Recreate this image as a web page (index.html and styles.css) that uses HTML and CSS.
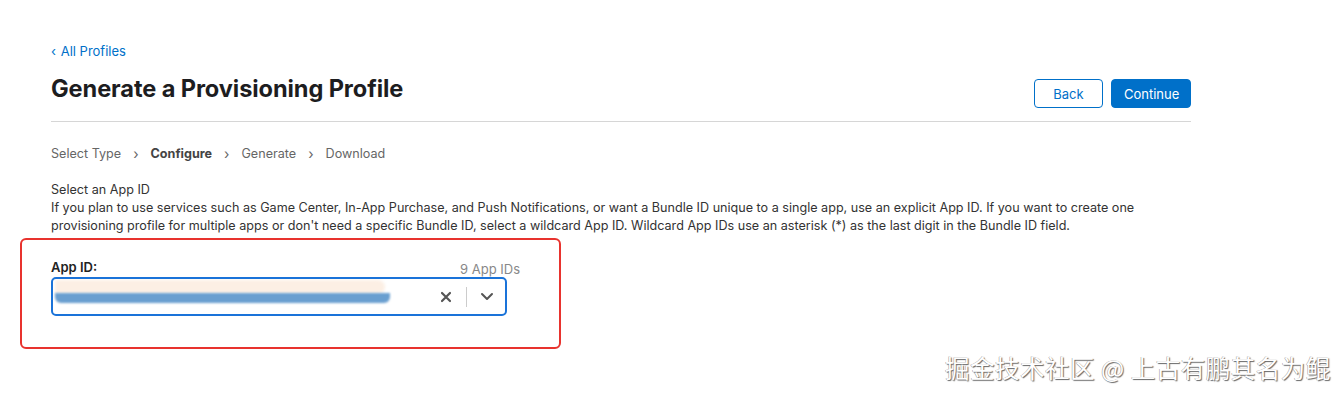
FILE: index.html
```html
<!DOCTYPE html>
<html lang="en">
<head>
<meta charset="utf-8">
<link rel="stylesheet" href="styles.css">
</head>
<body>
<main class="page">
  <a class="back-link" href="#"><span class="chev">&lsaquo;</span> All Profiles</a>
  <header class="head">
    <h1 class="title">Generate a Provisioning Profile</h1>
    <div class="actions">
      <button class="btn btn-outline">Back</button>
      <button class="btn btn-primary">Continue</button>
    </div>
  </header>
  <nav class="steps">
    <span class="step">Select Type</span>
    <span class="sep">&rsaquo;</span>
    <span class="step step-current">Configure</span>
    <span class="sep">&rsaquo;</span>
    <span class="step">Generate</span>
    <span class="sep">&rsaquo;</span>
    <span class="step">Download</span>
  </nav>
  <section class="intro">
    <p class="intro-title">Select an App ID</p>
    <p class="intro-text">If you plan to use services such as Game Center, In-App Purchase, and Push Notifications, or want a Bundle ID unique to a single app, use an explicit App ID. If you want to create one provisioning profile for multiple apps or don't need a specific Bundle ID, select a wildcard App ID. Wildcard App IDs use an asterisk (*) as the last digit in the Bundle ID field.</p>
  </section>
  <div class="highlight">
    <div class="field">
      <div class="field-head">
        <label class="field-label">App ID:</label>
        <span class="field-count">9 App IDs</span>
      </div>
      <div class="select">
        <div class="select-value">
          <div class="blur-top"></div>
          <div class="blur-bottom"></div>
        </div>
        <span class="clear">
          <svg width="12" height="12" viewBox="0 0 12 12"><path d="M2 2 L10 10 M10 2 L2 10" stroke="#555" stroke-width="2.2" stroke-linecap="round"/></svg>
        </span>
        <span class="divider"></span>
        <span class="toggle">
          <svg width="14" height="9" viewBox="0 0 14 9"><path d="M2 2 L7 7 L12 2" fill="none" stroke="#555" stroke-width="2" stroke-linecap="round" stroke-linejoin="round"/></svg>
        </span>
      </div>
    </div>
  </div>
</main>
<div class="watermark">掘金技术社区 @ 上古有鹏其名为鲲</div>
</body>
</html>
```

FILE: styles.css
```css
* { box-sizing: border-box; }
html, body { margin: 0; padding: 0; background: #fff; }
body {
  font-family: Inter, "Noto Sans", "Liberation Sans", sans-serif;
  color: #333;
  font-size: 13px;
  width: 1344px;
  height: 399px;
  overflow: hidden;
  position: relative;
}
.page {
  width: 1140px;
  margin-left: 51px;
  padding-top: 43px;
}
.back-link {
  display: block;
  color: #0070c9;
  text-decoration: none;
  font-size: 13px;
  line-height: 16px;
}
.chev { font-size: 13px; margin-right: 1px; }
.head {
  display: flex;
  justify-content: space-between;
  align-items: flex-start;
  margin-top: 15px;
  padding-bottom: 13px;
  border-bottom: 1px solid #d6d6d6;
}
.title {
  margin: 0;
  font-size: 23.6px;
  line-height: 30px;
  font-weight: 700;
  color: #1d1d1f;
  letter-spacing: -0.1px;
}
.actions {
  display: flex;
  gap: 8px;
  margin-top: 5px;
}
.btn {
  height: 29px;
  border-radius: 4px;
  font-family: inherit;
  font-size: 13px;
  padding: 0 12px;
  cursor: pointer;
}
.btn-outline {
  width: 69px;
  background: #fff;
  color: #0070c9;
  border: 1px solid #0070c9;
}
.btn-primary {
  width: 80px;
  background: #0070c9;
  color: #fff;
  border: 1px solid #0070c9;
}
.steps {
  display: flex;
  align-items: center;
  gap: 12px;
  margin-top: 24px;
  color: #666;
  font-size: 12.6px;
  line-height: 16px;
}
.step-current { font-weight: 700; color: #444; }
.sep { color: #666; font-size: 14px; }
.intro { margin-top: 19px; }
.intro p { margin: 0; line-height: 18px; color: #333; font-size: 12.6px; }
.highlight {
  margin-left: -31px;
  margin-top: 3px;
  width: 541px;
  height: 111px;
  border: 2px solid #e8332e;
  border-radius: 6px;
  padding: 17px 0 0 29px;
}
.field { width: 456px; }
.field-head {
  display: flex;
  justify-content: space-between;
  align-items: flex-end;
  width: 469px;
  height: 18px;
}
.field-label { font-weight: 600; color: #222; font-size: 13px; }
.field-count { color: #888; font-size: 13px; position: relative; top: 2px; }
.select {
  margin-top: 2px;
  height: 39px;
  border: 2px solid #1a73d9;
  border-radius: 5px;
  display: flex;
  align-items: center;
  overflow: hidden;
}
.select-value {
  flex: 1;
  height: 100%;
  position: relative;
}
.blur-top {
  position: absolute;
  left: 2px; top: 1px;
  width: 330px; height: 14px;
  background: #fcefe4;
  filter: blur(1.5px);
  border-radius: 0 8px 8px 0;
}
.blur-bottom {
  position: absolute;
  left: 2px; top: 14px;
  width: 335px; height: 10px;
  background: #6a9fd0;
  filter: blur(1px);
  border-radius: 0 0 6px 6px;
}
.clear {
  width: 28px;
  display: flex;
  justify-content: center;
  align-items: center;
}
.divider {
  width: 1px;
  height: 20px;
  background: #ccc;
  margin: 0 6px;
}
.toggle {
  width: 28px;
  display: flex;
  justify-content: center;
  align-items: center;
  margin-right: 4px;
}
.watermark {
  position: absolute;
  left: 945px;
  top: 350px;
  font-family: "Noto Sans CJK SC", sans-serif;
  font-size: 24.5px;
  color: #fff;
  text-shadow: 1px 1px 1px #666, -0.5px -0.5px 0.5px #999;
  letter-spacing: 0.5px;
  white-space: nowrap;
}
```
